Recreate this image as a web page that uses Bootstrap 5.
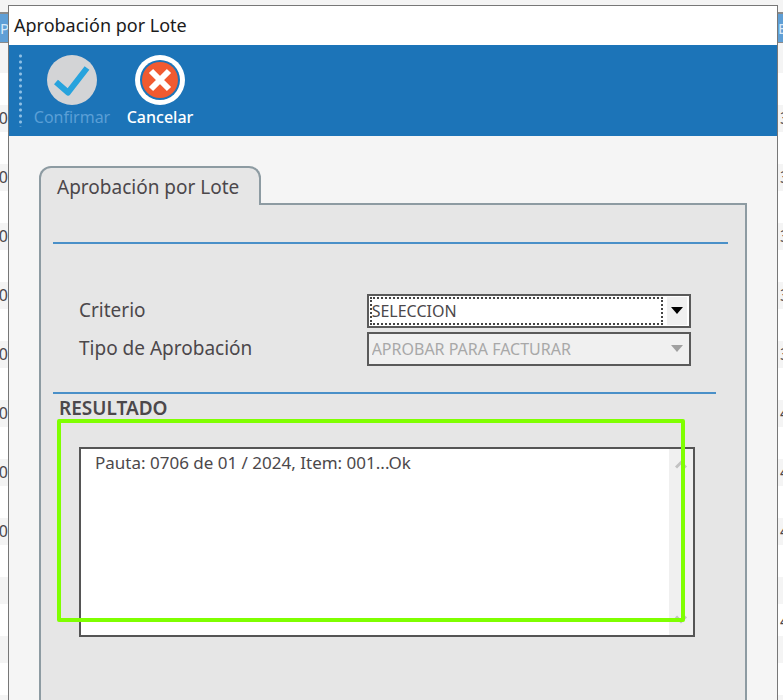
<!DOCTYPE html>
<html lang="es">
<head>
<meta charset="utf-8">
<meta name="viewport" content="width=device-width, initial-scale=1">
<title>Aprobación por Lote</title>
<link href="https://cdn.jsdelivr.net/npm/bootstrap@5.3.0/dist/css/bootstrap.min.css" rel="stylesheet">
<style>
  body { font-family: "Noto Sans", "Open Sans", sans-serif; background: #f4f4f4; color: #4c484b; font-size: 18px; }
  .shell { height: 100vh; }
  /* slices of the grid behind the dialog */
  .grid-slice { padding-top: 12px; }
  .grid-left { width: 8px; }
  .grid-right { width: 5px; }
  .slice-head { height: 31px; background: #5f9fd6; border: solid #8a8a8a; border-width: 2px 0 1px; color: #d8eaf8; font-size: 15px; line-height: 28px; margin-bottom: 3px; }
  .slice-row { height: 59px; flex: none; border-bottom: 32px solid #fff; font-size: 16px; line-height: 27px; }
  .grid-left .slice-row span { color: #2f7fc4; }
  .grid-right .slice-row { padding-left: 2px; }
  .grid-right .slice-late { padding-top: 29px; line-height: 30px; border-bottom: 0; background: linear-gradient(#f4f4f4 27px, #fff 27px); }
  .dialog { margin-top: 5px; border: 1px solid #777; border-bottom: 0; background: #f5f5f5; min-width: 0; }
  .dialog-title { height: 39px; background: #fff; color: #1b1b1b; font-size: 18px; line-height: 38px; padding-left: 5px; }
  .tool-strip { height: 91px; background: #1c74b8; padding: 8px 0 0 10px; }
  .grip { width: 3px; height: 74px; background: radial-gradient(circle, #8fbfe4 1px, transparent 2px) 0 0 / 3px 6px; margin-right: 10px; }
  .tool-btn { width: 80px; font-size: 16px; line-height: 20px; font-weight: 500; color: #fff; }
  .tool-btn:disabled { color: #5a9fd6; font-weight: 400; }
  .tool-btn svg { width: 52px; height: 52px; }
  .tool-btn span { margin-top: 2px; }
  .dialog-body { padding: 30px 30px 0; }
  .page-tab { background: #e6e6e6; border: 2px solid #8d9ba2; border-bottom: 0; border-radius: 12px 12px 0 0; height: 39px; width: 222px; margin-bottom: -2px; padding: 0 0 0 16px; font-size: 19px; line-height: 38px; text-align: left; color: #4c484b; z-index: 1; }
  .page-pane { background: #e6e6e6; border: 2px solid #8d9ba2; border-bottom: 0; padding: 37px 17px 0 12px; }
  .rule { height: 2px; background: #4a90c8; }
  .rule-short { margin-right: 12px; }
  .fields { padding: 50px 37px 22px 26px; }
  .field-row { display: grid; grid-template-columns: 47fr 53fr; height: 34px; align-items: center; margin-bottom: 4px; font-size: 19px; }
  .field-row label { line-height: 32px; padding-bottom: 2px; }
  .combo { height: 34px; border: 2px solid #5a5a5a; background: #fff; padding: 1px 2px 1px 1px; }
  .combo select { appearance: none; min-width: 0; background: transparent; border: 2px dotted transparent; outline: 0; padding: 0; font-size: 16px; color: #4c484b; }
  .combo-active select { border-color: #444; }
  .combo-off { background: #f0f0f0; }
  .combo-off select:disabled { color: #a8a8a8; opacity: 1; }
  .combo .arrow { width: 20px; margin-left: 4px; background: #f0f0f0; }
  .result-title { font-size: 19px; line-height: 28px; margin: 0 0 0 6px; color: #4c484b; font-weight: 600; }
  .result-area { padding: 25px 33px 0 26px; }
  .result-box { height: 190px; border: 2px solid #555; background: #fff; }
  .result-box textarea { border: 0; outline: 0; resize: none; overflow: hidden; padding: 2px 14px; font-size: 17px; line-height: 24px; color: #4c484b; min-width: 0; }
  .scroller { width: 24px; background: #f0f0f0; padding: 11px 0; }
  /* highlight drawn over the result */
  .highlight { inset: -3px 43px 15px 4px; border: 4px solid #7fff00; border-radius: 2px; pointer-events: none; }
</style>
<script src="https://cdn.jsdelivr.net/npm/bootstrap@5.3.0/dist/js/bootstrap.bundle.min.js"></script>
</head>
<body>
<div class="shell d-flex overflow-hidden">
  <div class="grid-slice grid-left d-flex flex-column overflow-hidden flex-shrink-0" aria-hidden="true">
    <div class="slice-head">Pr</div>
    <div class="slice-row"></div>
    <div class="slice-row d-flex justify-content-end"><span>0</span>0</div>
    <div class="slice-row d-flex justify-content-end"><span>0</span>0</div>
    <div class="slice-row d-flex justify-content-end"><span>0</span>0</div>
    <div class="slice-row d-flex justify-content-end"><span>0</span>0</div>
    <div class="slice-row d-flex justify-content-end"><span>0</span>0</div>
    <div class="slice-row d-flex justify-content-end"><span>0</span>0</div>
    <div class="slice-row d-flex justify-content-end"><span>0</span>0</div>
    <div class="slice-row d-flex justify-content-end"><span>0</span>0</div>
    <div class="slice-row"></div>
    <div class="slice-row"></div>
  </div>

  <main class="dialog flex-grow-1 d-flex flex-column">
    <h1 class="dialog-title m-0 fw-normal flex-shrink-0">Aprobación por Lote</h1>
    <div class="tool-strip d-flex flex-shrink-0">
      <div class="grip"></div>
      <div class="d-flex align-items-start gap-2">
        <button class="tool-btn border-0 bg-transparent p-0 d-flex flex-column align-items-center" type="button" disabled>
          <svg viewBox="0 0 52 52" aria-hidden="true"><circle cx="26" cy="27" r="25" fill="#d3d4d6"/><path d="M10 29 22 39.500 41 15" fill="none" stroke="#27a3dd" stroke-width="6" stroke-linejoin="round"/></svg>
          <span>Confirmar</span>
        </button>
        <button class="tool-btn border-0 bg-transparent p-0 d-flex flex-column align-items-center" type="button">
          <svg viewBox="0 0 52 52" aria-hidden="true"><circle cx="26" cy="27" r="25" fill="#fff"/><circle cx="26" cy="27" r="20" fill="#1c74b8"/><circle cx="26" cy="27" r="18" fill="#f15a31"/><path d="M17 18 35 36M35 18 17 36" stroke="#fff" stroke-width="6"/></svg>
          <span>Cancelar</span>
        </button>
      </div>
    </div>

    <div class="dialog-body flex-grow-1 d-flex flex-column">
      <button class="page-tab position-relative flex-shrink-0" type="button">Aprobación por Lote</button>
      <section class="page-pane flex-grow-1">
        <div class="rule"></div>
        <form class="fields">
          <div class="field-row">
            <label for="criterio">Criterio</label>
            <div class="combo combo-active d-flex">
              <select id="criterio" class="flex-grow-1"><option>SELECCION</option></select>
              <span class="arrow d-flex align-items-center justify-content-center"><svg width="12" height="8" viewBox="0 0 12 8"><path d="M0 0h12L6 7z" fill="#000"/></svg></span>
            </div>
          </div>
          <div class="field-row">
            <label for="tipo">Tipo de Aprobación</label>
            <div class="combo combo-off d-flex">
              <select id="tipo" class="flex-grow-1" disabled><option>APROBAR PARA FACTURAR</option></select>
              <span class="arrow d-flex align-items-center justify-content-center"><svg width="12" height="8" viewBox="0 0 12 8"><path d="M0 0h12L6 7z" fill="#a0a0a0"/></svg></span>
            </div>
          </div>
        </form>
        <div class="rule rule-short"></div>
        <h2 class="result-title"><label for="resultado">RESULTADO</label></h2>
        <div class="result-area position-relative">
          <div class="result-box d-flex">
            <textarea id="resultado" class="flex-grow-1" readonly>Pauta: 0706 de 01 / 2024, Item: 001...Ok</textarea>
            <div class="scroller d-flex flex-column justify-content-between align-items-center">
              <svg width="12" height="9" viewBox="0 0 12 9"><path d="M1 7.500 6 2.500 11 7.500" fill="none" stroke="#c2c2c2" stroke-width="3"/></svg>
              <svg width="12" height="9" viewBox="0 0 12 9"><path d="M1 1.500 6 6.500 11 1.500" fill="none" stroke="#c2c2c2" stroke-width="3"/></svg>
            </div>
          </div>
          <div class="highlight position-absolute"></div>
        </div>
      </section>
    </div>
  </main>

  <div class="grid-slice grid-right d-flex flex-column overflow-hidden flex-shrink-0" aria-hidden="true">
    <div class="slice-head">E</div>
    <div class="slice-row"></div>
    <div class="slice-row">3</div>
    <div class="slice-row">3</div>
    <div class="slice-row">3</div>
    <div class="slice-row">3</div>
    <div class="slice-row">3</div>
    <div class="slice-row">4</div>
    <div class="slice-row">4</div>
    <div class="slice-row">4</div>
    <div class="slice-row slice-late">4</div>
    <div class="slice-row"></div>
  </div>
</div>
</body>
</html>
